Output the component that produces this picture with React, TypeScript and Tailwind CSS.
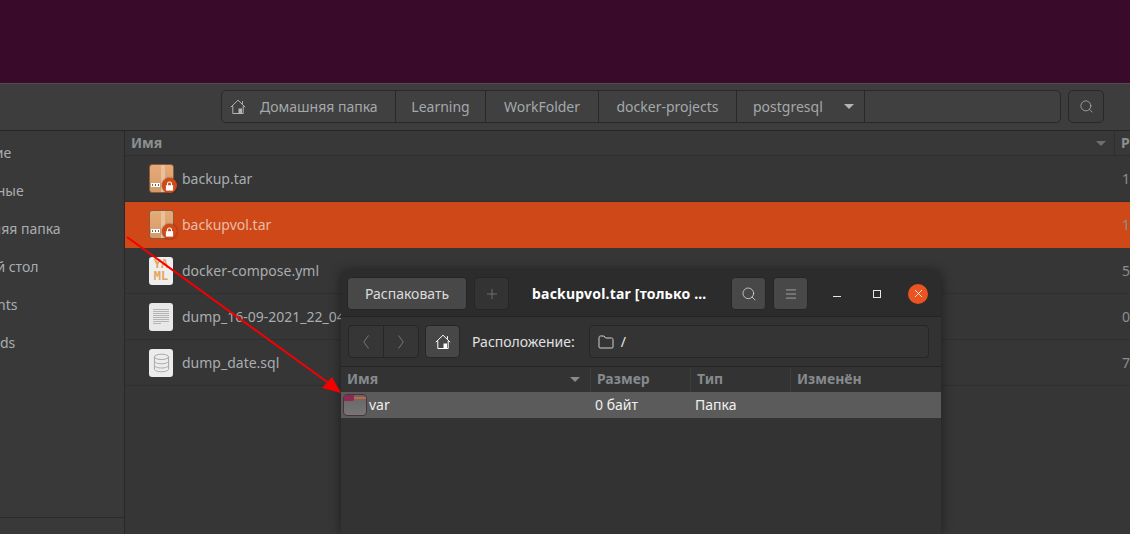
import { Search, Menu, Plus, X } from "lucide-react";

const crumbs = [
  { label: "Learning", w: "w-[90px]" },
  { label: "WorkFolder", w: "w-[113px]" },
  { label: "docker-projects", w: "w-[138px]" },
];

const sidebar = ["Недавние", "Избранные", "Домашняя папка", "Рабочий стол", "Documents", "Downloads"];
const sidebarOffsets = ["-ml-[56px]", "-ml-[54px]", "-ml-[57px]", "-ml-[53px]", "-ml-[58px]", "-ml-[58px]"];

const files = [
  { name: "backup.tar", icon: "tar", size: "1" },
  { name: "backupvol.tar", icon: "tar", size: "1", selected: true },
  { name: "docker-compose.yml", icon: "yml", size: "5" },
  { name: "dump_16-09-2021_22_04_07.sql", icon: "txt", size: "0" },
  { name: "dump_date.sql", icon: "sql", size: "7" },
];

function HomeIcon({ className }: { className?: string }) {
  return (
    <svg viewBox="0 0 16 16" className={className} fill="none" stroke="currentColor" strokeWidth="1">
      <path d="M0.8 8.2 8 1.2l7.2 7" />
      <path d="M12.5 2.200v2.600" />
      <path d="M2.800 7v7.500h10.400V7" />
      <rect x="8.500" y="9.500" width="3.500" height="5" fill="currentColor" stroke="none" />
    </svg>
  );
}

function FileIcon({ kind }: { kind: string }) {
  if (kind === "tar") {
    return (
      <div className="relative w-[25px] h-[29px] rounded-[3px] border border-[#8a5a3a] bg-gradient-to-b from-[#e5ac7a] to-[#d49a68]">
        <div className="absolute left-[11px] top-0 bottom-0 w-[4px] bg-[#ecc09a]" />
        <div className="absolute left-[1px] bottom-[5px] w-[9px] h-[4px] flex items-center justify-between bg-white px-[1px]">
          <div className="w-[1px] h-[2px] bg-[#666666]" />
          <div className="w-[1px] h-[2px] bg-[#666666]" />
          <div className="w-[1px] h-[2px] bg-[#666666]" />
        </div>
        <div className="absolute -right-[4px] -bottom-[1px] w-[15px] h-[15px] rounded-full bg-[#cf4a18] shadow-[0_0_2px_rgba(80,20,0,0.8)] flex items-center justify-center">
          <svg viewBox="0 0 10 11" className="w-[9px] h-[10px]">
            <path d="M2.800 5V3.200a2.200 2.200 0 0 1 4.400 0V5" fill="none" stroke="#fff" strokeWidth="1.200" />
            <rect x="1" y="4.600" width="8" height="6" fill="#fff" />
          </svg>
        </div>
      </div>
    );
  }
  if (kind === "yml") {
    return (
      <div className="w-[24px] h-[28px] rounded-[3px] bg-[#eeeeee] flex flex-col items-center justify-center overflow-hidden font-['DejaVu_Sans_Mono',monospace] font-bold text-[12px] leading-[11px] text-[#e5a55c]">
        <span>YA</span>
        <span className="mt-[1px]">ML</span>
      </div>
    );
  }
  if (kind === "txt") {
    return (
      <div className="w-[24px] h-[28px] rounded-[3px] bg-[#e8e8e8] flex flex-col justify-center gap-[1px] px-[4px]">
        {[16, 16, 16, 16, 16, 16, 16, 8].map((w, i) => (
          <div key={i} className="h-[1px] bg-[#b4b4b4]" style={{ width: w }} />
        ))}
      </div>
    );
  }
  return (
    <div className="w-[24px] h-[28px] rounded-[3px] bg-[#ececec] flex items-center justify-center">
      <svg viewBox="0 0 18 20" className="w-[17px] h-[20px]" fill="none" stroke="#a4a4a4" strokeWidth="1">
        <ellipse cx="9" cy="3.500" rx="7.500" ry="2.800" />
        <path d="M1.500 3.500v13c0 1.500 3.400 2.800 7.500 2.800s7.500-1.300 7.500-2.800v-13" />
        <path d="M1.500 8c0 1.500 3.400 2.800 7.500 2.800S16.500 9.500 16.500 8" />
        <path d="M1.500 12.500c0 1.500 3.400 2.800 7.500 2.800s7.500-1.300 7.500-2.800" />
      </svg>
    </div>
  );
}

export default function App() {
  return (
    <div className="relative w-[1130px] h-[534px] overflow-hidden bg-[#353535] font-['Noto_Sans',sans-serif] text-[14px] text-[#a9adb0]">
      <div className="h-[83px] bg-[#3a0a2a]" />

      {/* file manager header */}
      <div className="h-[48px] bg-[#3d3d3d] border-t border-[#505050] border-b border-b-[#262626] flex items-center pl-[221px] pb-[1px]">
        <div className="flex h-[33px] w-[840px] rounded-[5px] border border-[#282828] bg-[#404040] text-[#a4a8ab]">
          <div className="w-[174px] flex items-center pl-[8px] border-r border-[#282828]">
            <HomeIcon className="w-[16px] h-[16px] text-[#b4b4b4]" />
            <span className="ml-[14px]">Домашняя папка</span>
          </div>
          {crumbs.map((c) => (
            <div key={c.label} className={`${c.w} flex items-center justify-center border-r border-[#282828]`}>
              {c.label}
            </div>
          ))}
          <div className="w-[128px] flex items-center pl-[16px] gap-[21px] border-r border-[#282828]">
            <span>postgresql</span>
            <div className="w-0 h-0 border-x-[5px] border-x-transparent border-t-[5px] border-t-[#b4b4b4]" />
          </div>
        </div>
        <div className="ml-[7px] w-[36px] h-[33px] rounded-[5px] border border-[#282828] flex items-center justify-center">
          <Search size={15} strokeWidth={1.2} className="text-[#b4b4b4]" />
        </div>
      </div>

      <div className="flex h-[403px]">
        {/* sidebar */}
        <div className="w-[125px] shrink-0 border-r border-[#282828] bg-[#393939] flex flex-col pt-[2px] overflow-hidden relative">
          {sidebar.map((s, i) => (
            <div key={s} className="h-[38px] flex items-center whitespace-nowrap">
              <span className={sidebarOffsets[i]}>{s}</span>
            </div>
          ))}
          <div className="absolute left-0 right-0 bottom-[16px] h-px bg-[#2b2b2b]" />
        </div>

        {/* file list */}
        <div className="flex-1 bg-[#363636] min-w-0">
          <div className="h-[25px] flex items-center border-b border-[#2e2e2e] bg-[#383838]">
            <span className="pl-[6px] pb-[2px] font-bold text-[#8b8f92]">Имя</span>
            <div className="ml-auto mr-[8px] w-0 h-0 border-x-[5px] border-x-transparent border-t-[5px] border-t-[#6e6e6e]" />
            <div className="w-[16px] h-full border-l border-[#2e2e2e] pl-[6px] pb-[2px] flex items-center font-bold text-[#8b8f92]">Р</div>
          </div>
          {files.map((f) => (
            <div
              key={f.name}
              className={`h-[46px] flex items-center pl-[24px] border-b ${f.selected ? "bg-[#cf4918] border-[#cf4918]" : "border-[#2f2f2f]"}`}
            >
              <div className="w-[25px] flex">
                <FileIcon kind={f.icon} />
              </div>
              <span className={`ml-[8px] ${f.selected ? "text-[#e8bca8]" : ""}`}>{f.name}</span>
              <span className="ml-auto w-[8px] text-[#8b8f92]">{f.size}</span>
            </div>
          ))}
        </div>
      </div>

      {/* archive window */}
      <div className="absolute left-[341px] top-[271px] w-[600px] h-[263px] rounded-t-[8px] bg-[#333333] shadow-[0_0_12px_rgba(0,0,0,0.45)] text-[#e6e6e6]">
        <div className="h-[46px] rounded-t-[8px] bg-[#2c2c2c] border-b border-[#232323] flex items-center pl-[6px]">
          <button className="w-[120px] h-[33px] rounded-[4px] bg-[#484848] border border-[#262626] text-[#dcdcdc] text-[14px]">Распаковать</button>
          <div className="ml-[7px] w-[35px] h-[33px] rounded-[4px] bg-[#333333] border border-[#262626] flex items-center justify-center">
            <Plus size={16} strokeWidth={1} className="text-[#8a8a8a]" />
          </div>
          <span className="ml-[23px] w-[178px] whitespace-nowrap font-bold text-[#ffffff] tracking-[0.2px]">backupvol.tar [только …</span>
          <div className="ml-[21px] w-[35px] h-[33px] rounded-[4px] bg-[#484848] border border-[#262626] flex items-center justify-center">
            <Search size={16} strokeWidth={1.2} className="text-[#dcdcdc]" />
          </div>
          <div className="ml-[7px] w-[35px] h-[33px] rounded-[4px] bg-[#484848] border border-[#262626] flex items-center justify-center">
            <Menu size={14} strokeWidth={1} className="text-[#dcdcdc]" />
          </div>
          <div className="ml-[25px] w-[8px] h-[1px] mt-[6px] bg-[#e6e6e6]" />
          <div className="ml-[32px] w-[8px] h-[8px] border border-[#e6e6e6]" />
          <div className="ml-[27px] w-[20px] h-[20px] rounded-full bg-[#e95420] flex items-center justify-center">
            <X size={13} strokeWidth={1.500} className="text-white" />
          </div>
        </div>
        <div className="h-[50px] bg-[#323232] border-b border-[#232323] flex items-center pl-[7px]">
          <div className="flex w-[71px] h-[33px] rounded-[4px] border border-[#262626] bg-[#363636]">
            <div className="flex-1 flex items-center justify-center border-r border-[#262626]">
              <svg viewBox="0 0 6 14" className="w-[6px] h-[14px]" fill="none" stroke="#777777" strokeWidth="1">
                <path d="M5.500 0.500 0.800 7l4.700 6.500" />
              </svg>
            </div>
            <div className="flex-1 flex items-center justify-center">
              <svg viewBox="0 0 6 14" className="w-[6px] h-[14px]" fill="none" stroke="#777777" strokeWidth="1">
                <path d="M0.500 0.500 5.200 7l-4.700 6.500" />
              </svg>
            </div>
          </div>
          <div className="ml-[6px] w-[35px] h-[33px] rounded-[4px] border border-[#262626] bg-[#474747] flex items-center justify-center">
            <HomeIcon className="w-[16px] h-[16px] text-white" />
          </div>
          <span className="ml-[12px] text-[#e0e0e0]">Расположение:</span>
          <div className="ml-[14px] w-[340px] h-[33px] rounded-[4px] border border-[#262626] bg-[#343434] flex items-center pl-[8px] gap-[7px]">
            <svg viewBox="0 0 16 14" className="w-[16px] h-[14px]" fill="none" stroke="#d0d0d0" strokeWidth="1">
              <path d="M1 12V2.500C1 1.700 1.500 1 2.500 1h3.500l1.500 2h6c1 0 1.500 .7 1.500 1.500V12c0 .6-.5 1-1 1H2c-.5 0-1-.4-1-1z" />
            </svg>
            <span>/</span>
          </div>
        </div>
        <div className="h-[25px] flex items-center bg-[#333333] text-[#858a8d] font-bold">
          <div className="w-[250px] h-full flex items-center justify-between pl-[6px] pr-[10px] pb-[2px] border-r border-[#3d3d3d]">
            <span>Имя</span>
            <div className="w-0 h-0 mt-[2px] border-x-[5px] border-x-transparent border-t-[5px] border-t-[#8a8a8a]" />
          </div>
          <div className="w-[100px] h-full flex items-center pl-[6px] pb-[2px] border-r border-[#3d3d3d]">Размер</div>
          <div className="w-[100px] h-full flex items-center pl-[6px] pb-[2px] border-r border-[#3d3d3d]">Тип</div>
          <div className="flex-1 pl-[6px] pb-[2px]">Изменён</div>
        </div>
        <div className="h-[26px] flex items-center pb-[1px] bg-[#5b5b5b] text-[#f0f0f0]">
          <div className="w-[250px] flex items-center pl-[2px]">
            <div className="relative w-[24px] h-[22px] mt-[1px] rounded-[4px] border border-[#4a3340] bg-gradient-to-b from-[#666666] to-[#767676] overflow-hidden">
              <div className="absolute left-0 right-0 top-[2px] h-[2px] bg-[#c9663f]" />
              <div className="absolute left-0 top-0 w-[10px] h-[6px] rounded-br-[2px] bg-[#8e2a52]" />
            </div>
            <span className="ml-[2px]">var</span>
          </div>
          <div className="w-[100px] pl-[4px]">0 байт</div>
          <div className="pl-[4px]">Папка</div>
        </div>
      </div>

      {/* annotation arrow */}
      <svg className="absolute inset-0 pointer-events-none" width="1130" height="534" viewBox="0 0 1130 534">
        <line x1="127" y1="237" x2="330" y2="384" stroke="#f40000" strokeWidth="2" />
        <polygon points="341,393 322,388 332,377" fill="#f40000" />
      </svg>
    </div>
  );
}
